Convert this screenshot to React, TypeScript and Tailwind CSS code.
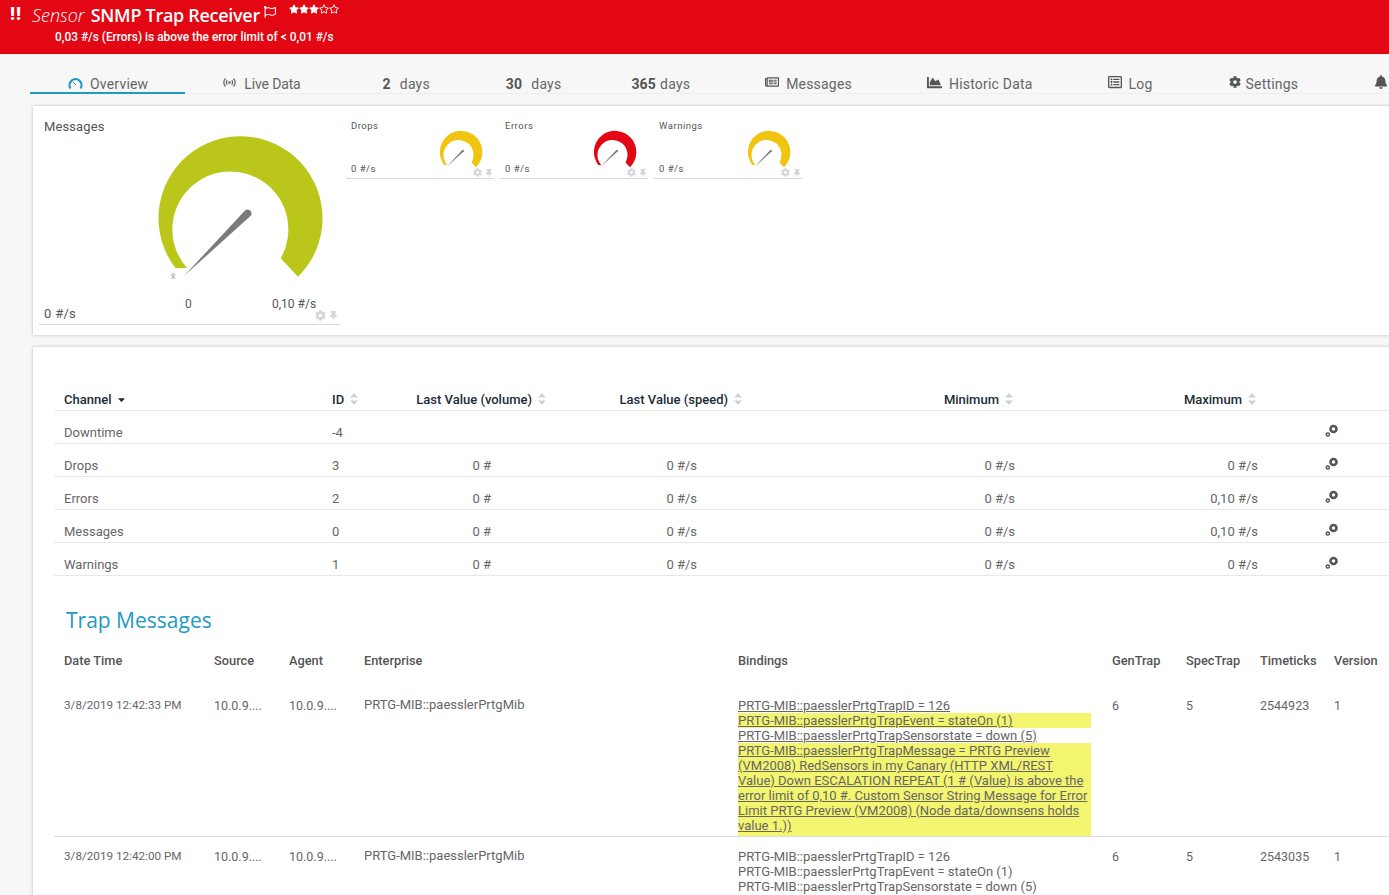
import { FaBell, FaChartArea, FaCog, FaRegFlag, FaRegListAlt, FaRegNewspaper, FaRegStar, FaSortDown, FaStar, FaThumbtack } from "react-icons/fa";
import { MdOutlineSensors } from "react-icons/md";
import { ReactNode } from "react";

const channels = [
    { name: "Downtime", id: "-4", volume: "", speed: "", min: "", max: "" },
    { name: "Drops", id: "3", volume: "0 #", speed: "0 #/s", min: "0 #/s", max: "0 #/s" },
    { name: "Errors", id: "2", volume: "0 #", speed: "0 #/s", min: "0 #/s", max: "0,10 #/s" },
    { name: "Messages", id: "0", volume: "0 #", speed: "0 #/s", min: "0 #/s", max: "0,10 #/s" },
    { name: "Warnings", id: "1", volume: "0 #", speed: "0 #/s", min: "0 #/s", max: "0 #/s" },
];

const colsChannel = "grid grid-cols-[268px_60px_154px_196px_273px_243px_81px_1fr] h-[33px] items-end border-b border-[#e8e8e8] pb-[1px] pl-[10px]";
const colsTrap = "grid grid-cols-[150px_75px_75px_374px_374px_74px_74px_74px_1fr] pl-[10px]";

// same drawing for big and small gauges, only the width changes
function Gauge({ color, width }: { color: string; width: number }) {
    return (
        <svg width={width} viewBox="155 132 170 148" className="block">
            <path d="M175.6 267.3A82 82 0 1 1 298 275.7L280.7 257.3A58 58 0 1 0 187 267Z" fill={color} />
            <path d="M184 275L245 209.5A4 4 0 0 1 251 214.5Z" fill="#7b7b7b" />
        </svg>
    );
}

function Gears() {
    return (
        <svg width="14" height="14" viewBox="0 0 14 14" className="block">
            <circle cx="8.5" cy="5" r="3" fill="none" stroke="#555" strokeWidth="2.6" />
            <circle cx="2.8" cy="10.5" r="1.6" fill="none" stroke="#555" strokeWidth="1.5" />
        </svg>
    );
}

function OverviewIcon() {
    return (
        <svg width="15" height="13" viewBox="0 0 15 13" className="-mt-[3px]">
            <path d="M2.5 11.5A6 6 0 1 1 12.5 11.5" fill="none" stroke="#1e9ac4" strokeWidth="2.2" />
            <path d="M5 5L8 8" stroke="#777" strokeWidth="1" />
        </svg>
    );
}

function Sort() {
    return (
        <svg width="8" height="12" viewBox="0 0 8 12" className="ml-[6px] -mt-[3px] inline-block">
            <path d="M4 0L8 4.6H0Z M4 12L0 7.4H8Z" fill="#ccd2d6" />
        </svg>
    );
}

function SmallTile({ title, color }: { title: string; color: string }) {
    return (
        <div className="relative flex h-[64px] w-[148px] justify-between border-b border-[#d9d9d9] pl-[5px] text-[9.5px] tracking-[0.5px] text-[#555]">
            <div className="flex flex-col justify-between pb-[2px] pt-[4px]">
                <span>{title}</span>
                <span>0 #/s</span>
            </div>
            <div className="mr-[11px] mt-[15px]">
                <Gauge color={color} width={44} />
            </div>
            <div className="absolute right-[1px] bottom-[1px] flex items-center gap-[3px] text-[#d3d6d8]">
                <FaCog className="text-[9px]" />
                <FaThumbtack className="text-[8px]" />
            </div>
        </div>
    );
}

function Tab({ icon, active, className, children }: { icon?: ReactNode; active?: boolean; className?: string; children: ReactNode }) {
    return (
        <div className={`-mb-px flex h-[26px] items-center gap-[7px] px-[38px] text-[14px] tracking-[0.2px] text-[#666] ${active ? "border-b-2 border-[#1e9ac4] pt-[9px]" : "pt-[6px]"} ${className ?? ""}`}>
            {icon}
            <span>{children}</span>
        </div>
    );
}

function Days({ n, gap }: { n: string; gap: string }) {
    return (
        <>
            <b className={`${gap} font-bold text-[#555]`}>{n}</b>days
        </>
    );
}

function TrapRow({ date, ticks, marked }: { date: string; ticks: string; marked?: boolean }) {
    const mark = marked ? "bg-[#f3f56f]" : "";
    const line = marked ? "underline" : "";
    return (
        <div className={`${colsTrap} text-[13px] leading-[15px] text-[#666] ${marked ? "border-b border-[#ddd] pt-[27px]" : "pt-[12px]"}`}>
            <div className="text-[11.7px]">{date}</div>
            <div className="text-[12.5px]">10.0.9....</div>
            <div className="text-[12.5px]">10.0.9....</div>
            <div className="-mt-px">PRTG-MIB::paesslerPrtgMib</div>
            <div className={`w-[353px] ${line}`}>
                <div>PRTG-MIB::paesslerPrtgTrapID = 126</div>
                <div className={mark}>PRTG-MIB::paesslerPrtgTrapEvent = stateOn (1)</div>
                <div>PRTG-MIB::paesslerPrtgTrapSensorstate = down (5)</div>
                {marked && (
                    <div className="bg-[#f3f56f] pb-[3px]">
                        PRTG-MIB::paesslerPrtgTrapMessage = PRTG Preview (VM2008) RedSensors in my Canary (HTTP XML/REST Value) Down ESCALATION REPEAT (1 # (Value) is above the error limit of 0,10 #. Custom Sensor String Message for Error Limit PRTG Preview (VM2008) (Node data/downsens holds value 1.))
                    </div>
                )}
            </div>
            <div className="text-[12.5px]">6</div>
            <div className="text-[12.5px]">5</div>
            <div className="text-[12.5px]">{ticks}</div>
            <div className="text-[12.5px]">1</div>
        </div>
    );
}

export default function App() {
    return (
        <div className="h-[895px] overflow-hidden bg-[#f7f7f7] font-[Roboto,sans-serif]">
            {/* cabecera roja */}
            <header className="h-[54px] bg-[#e30613] text-white">
                <div className="flex h-[31px] items-center">
                    <span className="ml-[10px] w-[22px] text-[18px] font-black leading-none tracking-[1px] -mt-[3px]">!!</span>
                    <span className="font-['Open_Sans',sans-serif] text-[18px] italic font-light">Sensor</span>
                    <span className="ml-[6px] font-['Open_Sans',sans-serif] text-[18px] font-semibold tracking-[-0.3px]">SNMP Trap Receiver</span>
                    <FaRegFlag className="ml-[4px] -mt-[8px] text-[12px]" />
                    <div className="ml-[13px] -mt-[13px] flex text-[10px]">
                        <FaStar /><FaStar /><FaStar /><FaRegStar /><FaRegStar />
                    </div>
                </div>
                <div className="ml-[55px] mt-px text-[11.9px] font-medium leading-[10px]">0,03 #/s (Errors) is above the error limit of &lt; 0,01 #/s</div>
            </header>

            {/* pestañas */}
            <nav className="ml-[30px] flex h-[40px] items-end whitespace-nowrap border-b border-[#eeeeee]">
                <Tab active className="pr-[37px]" icon={<OverviewIcon />}>Overview</Tab>
                <Tab className="mr-[6px]" icon={<MdOutlineSensors className="-ml-px -mt-[4px] text-[15px] text-[#666]" />}>
                    <span className="tracking-[-0.15px]">Live Data</span>
                </Tab>
                <Tab><Days n="2" gap="mr-[9px]" /></Tab>
                <Tab><Days n="30" gap="mr-[9px]" /></Tab>
                <Tab className="-ml-[6px]"><Days n="365" gap="mr-[4px]" /></Tab>
                <Tab className="-ml-px" icon={<FaRegNewspaper className="-mt-[4px] text-[14px] text-[#555]" />}>Messages</Tab>
                <Tab className="-ml-px" icon={<FaChartArea className="-mt-[4px] text-[15px] text-[#555]" />}>Historic Data</Tab>
                <Tab className="-ml-px" icon={<FaRegListAlt className="-mt-[4px] text-[14px] text-[#555]" />}>Log</Tab>
                <Tab icon={<FaCog className="-mr-[2px] -mt-[4px] text-[12px] text-[#555]" />}>Settings</Tab>
                <div className="ml-[38px] pb-[4px]"><FaBell className="text-[14px] text-[#555]" /></div>
            </nav>

            {/* gauges */}
            <section className="ml-[33px] mt-[12px] flex h-[229px] bg-white pl-[6px] pt-[9px] shadow-[0_0_3px_rgba(0,0,0,0.25)]">
                <div className="relative flex h-[210px] w-[301px] border-b border-[#d9d9d9] text-[#555]">
                    <div className="flex w-[116px] flex-col justify-between pb-[1px] pl-[5px] text-[13px] tracking-[0.1px]">
                        <span className="mt-[2px]">Messages</span>
                        <span className="tracking-[0.3px]">0 #/s</span>
                    </div>
                    <div className="mt-[18px]">
                        <Gauge color="#bac619" width={170} />
                        <div className="mt-[14px] flex text-[12px]">
                            <span className="ml-[30px] w-[87px]">0</span>
                            <span>0,10 #/s</span>
                        </div>
                    </div>
                    {/* marca de la media junto a la aguja */}
                    <span className="absolute left-[132px] top-[155px] text-[9px] text-[#999]">x̄</span>
                    <div className="absolute right-[2px] bottom-[3px] flex items-center gap-[3px] text-[#d3d6d8]">
                        <FaCog className="text-[11px]" />
                        <FaThumbtack className="text-[9px]" />
                    </div>
                </div>
                <div className="ml-[6px] flex items-start gap-[6px]">
                    <SmallTile title="Drops" color="#f1c40f" />
                    <SmallTile title="Errors" color="#e30613" />
                    <SmallTile title="Warnings" color="#f1c40f" />
                </div>
            </section>

            <section className="ml-[33px] mt-[12px] h-[560px] bg-white pl-[21px] pt-[31px] shadow-[0_0_3px_rgba(0,0,0,0.25)]">
                {/* canales */}
                <div className={`${colsChannel} text-[13px] font-medium text-[#1c2b36]`}>
                    <div className="flex items-center">Channel <FaSortDown className="ml-[5px] -mt-[3px] text-[11px]" /></div>
                    <div>ID<Sort /></div>
                    <div className="text-right">Last Value (volume)<Sort /></div>
                    <div className="text-right">Last Value (speed)<Sort /></div>
                    <div className="pr-[2px] text-right">Minimum<Sort /></div>
                    <div className="pr-[2px] text-right">Maximum<Sort /></div>
                </div>
                {channels.map(c => (
                    <div key={c.name} className={`${colsChannel} text-[13px] text-[#666]`}>
                        <div>{c.name}</div>
                        <div>{c.id}</div>
                        <div className="pr-[55px] text-right">{c.volume}</div>
                        <div className="pr-[45px] text-right">{c.speed}</div>
                        <div className="text-right">{c.min}</div>
                        <div className="text-right">{c.max}</div>
                        <div className="justify-self-end mb-[4px]"><Gears /></div>
                    </div>
                ))}

                {/* trampas */}
                <h2 className="ml-[12px] mt-[29px] h-[30px] font-['Open_Sans',sans-serif] text-[21px] leading-[30px] text-[#1e9ac4]">Trap Messages</h2>
                <div className={`${colsTrap} mt-[16px] h-[20px] items-center text-[12.8px] font-medium text-[#555]`}>
                    <div>Date Time</div>
                    <div>Source</div>
                    <div>Agent</div>
                    <div>Enterprise</div>
                    <div>Bindings</div>
                    <div>GenTrap</div>
                    <div>SpecTrap</div>
                    <div>Timeticks</div>
                    <div>Version</div>
                </div>
                <TrapRow marked date="3/8/2019 12:42:33 PM" ticks="2544923" />
                <TrapRow date="3/8/2019 12:42:00 PM" ticks="2543035" />
            </section>
        </div>
    );
}
